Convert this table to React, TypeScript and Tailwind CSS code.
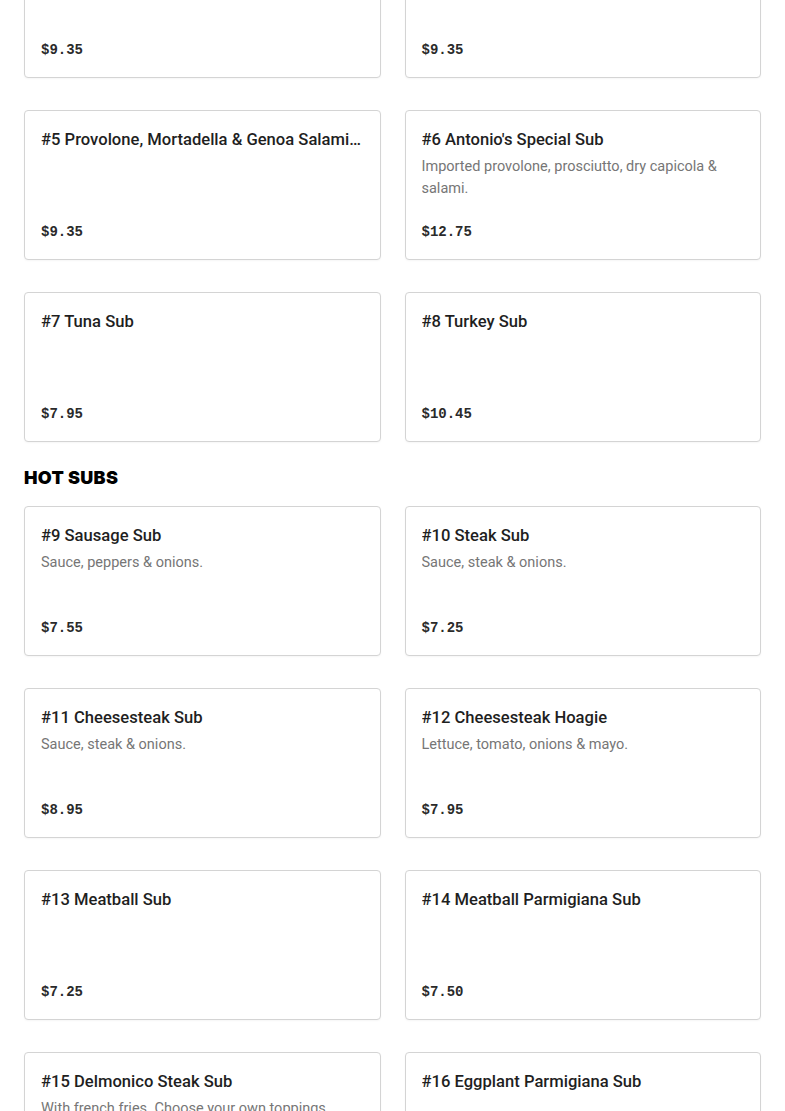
const coldTop = [
  { name: "#3 Ham Sub", desc: "", price: "$9.35" },
  { name: "#4 Ham & Cheese Sub", desc: "", price: "$9.35" },
];

const cold = [
  { name: "#5 Provolone, Mortadella & Genoa Salami Sub", desc: "", price: "$9.35" },
  {
    name: "#6 Antonio's Special Sub",
    desc: "Imported provolone, prosciutto, dry capicola & salami.",
    price: "$12.75",
  },
  { name: "#7 Tuna Sub", desc: "", price: "$7.95" },
  { name: "#8 Turkey Sub", desc: "", price: "$10.45" },
];

const hot = [
  { name: "#9 Sausage Sub", desc: "Sauce, peppers & onions.", price: "$7.55" },
  { name: "#10 Steak Sub", desc: "Sauce, steak & onions.", price: "$7.25" },
  { name: "#11 Cheesesteak Sub", desc: "Sauce, steak & onions.", price: "$8.95" },
  { name: "#12 Cheesesteak Hoagie", desc: "Lettuce, tomato, onions & mayo.", price: "$7.95" },
  { name: "#13 Meatball Sub", desc: "", price: "$7.25" },
  { name: "#14 Meatball Parmigiana Sub", desc: "", price: "$7.50" },
  {
    name: "#15 Delmonico Steak Sub",
    desc: "With french fries. Choose your own toppings.",
    price: "$11.95",
  },
  { name: "#16 Eggplant Parmigiana Sub", desc: "", price: "$7.95" },
];

type Item = { name: string; desc: string; price: string };

function ItemCard({ item }: { item: Item }) {
  return (
    <div className="flex h-[150px] flex-col rounded-[4px] border border-[#d4d4d4] bg-white px-4 pb-[15px] pt-[17px] shadow-[0_1px_2px_rgba(0,0,0,0.04)]">
      <h3 className="truncate text-[16.6px] font-medium leading-6 text-[#1f1f1f]">{item.name}</h3>
      {item.desc && (
        <p className="mt-1 line-clamp-2 text-[14.5px] leading-[22px] text-[#767676]">{item.desc}</p>
      )}
      <div className="mt-auto font-['Liberation_Mono',monospace] text-[14px] font-bold leading-6 text-[#2a2a2a]">
        {item.price}
      </div>
    </div>
  );
}

export default function App() {
  return (
    <div className="h-[1111px] overflow-hidden bg-white font-['Roboto','Liberation_Sans',sans-serif]">
      <div className="-mt-[72px] px-6">
        <div className="grid grid-cols-2 gap-x-6 gap-y-8">
          {[...coldTop, ...cold].map((item) => (
            <ItemCard key={item.name} item={item} />
          ))}
        </div>

        <h2 className="mb-4 mt-6 font-['Inter',sans-serif] text-[18px] font-black leading-6 tracking-[0.3px] text-black">
          HOT SUBS
        </h2>

        <div className="grid grid-cols-2 gap-x-6 gap-y-8">
          {hot.map((item) => (
            <ItemCard key={item.name} item={item} />
          ))}
        </div>
      </div>
    </div>
  );
}
